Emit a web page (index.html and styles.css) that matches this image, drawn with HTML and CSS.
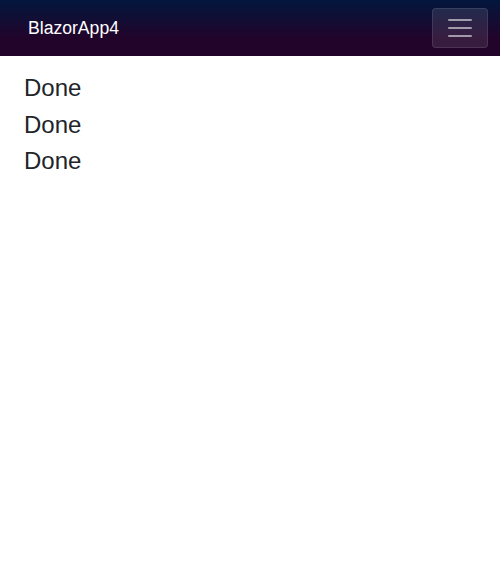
FILE: index.html
```html
<!DOCTYPE html>
<html lang="en">
<head>
    <meta charset="UTF-8">
    <meta name="viewport" content="width=device-width, initial-scale=1.0">
    <title>BlazorApp4</title>
    <link rel="stylesheet" href="styles.css">
</head>
<body>
    <div class="page">
        <div class="sidebar">
            <div class="top-row">
                <a class="navbar-brand" href="#">BlazorApp4</a>
                <button class="navbar-toggler" title="Navigation menu">
                    <svg class="toggler-icon" viewBox="0 0 30 30" width="30" height="30">
                        <path d="M4 7h22M4 15h22M4 23h22" stroke="rgba(255,255,255,0.55)" stroke-width="2" stroke-linecap="round" stroke-miterlimit="10" fill="none"/>
                    </svg>
                </button>
            </div>
        </div>

        <main class="content">
            <p class="status">Done</p>
            <p class="status">Done</p>
            <p class="status">Done</p>
        </main>
    </div>
</body>
</html>
```

FILE: styles.css
```css
* {
    margin: 0;
    padding: 0;
    box-sizing: border-box;
}

body {
    font-family: 'Liberation Sans', Arial, sans-serif;
    background: #fff;
    color: #212529;
}

.sidebar {
    background-image: linear-gradient(180deg, rgb(5, 39, 103) 0%, #3a0647 70%);
}

.top-row {
    height: 56px;
    display: flex;
    align-items: center;
    justify-content: space-between;
    padding: 0 12px 0 28px;
    background-color: rgba(0, 0, 0, 0.4);
}

.navbar-brand {
    font-size: 1.1rem;
    color: #fff;
    text-decoration: none;
}

.navbar-toggler {
    width: 56px;
    height: 40px;
    display: flex;
    align-items: center;
    justify-content: center;
    background-color: rgba(255, 255, 255, 0.1);
    border: 1px solid rgba(255, 255, 255, 0.1);
    border-radius: 4px;
    cursor: pointer;
}

.toggler-icon {
    display: block;
}

.content {
    padding: 14px 24px 0;
}

.status {
    font-size: 24px;
    line-height: 36.5px;
}
```
